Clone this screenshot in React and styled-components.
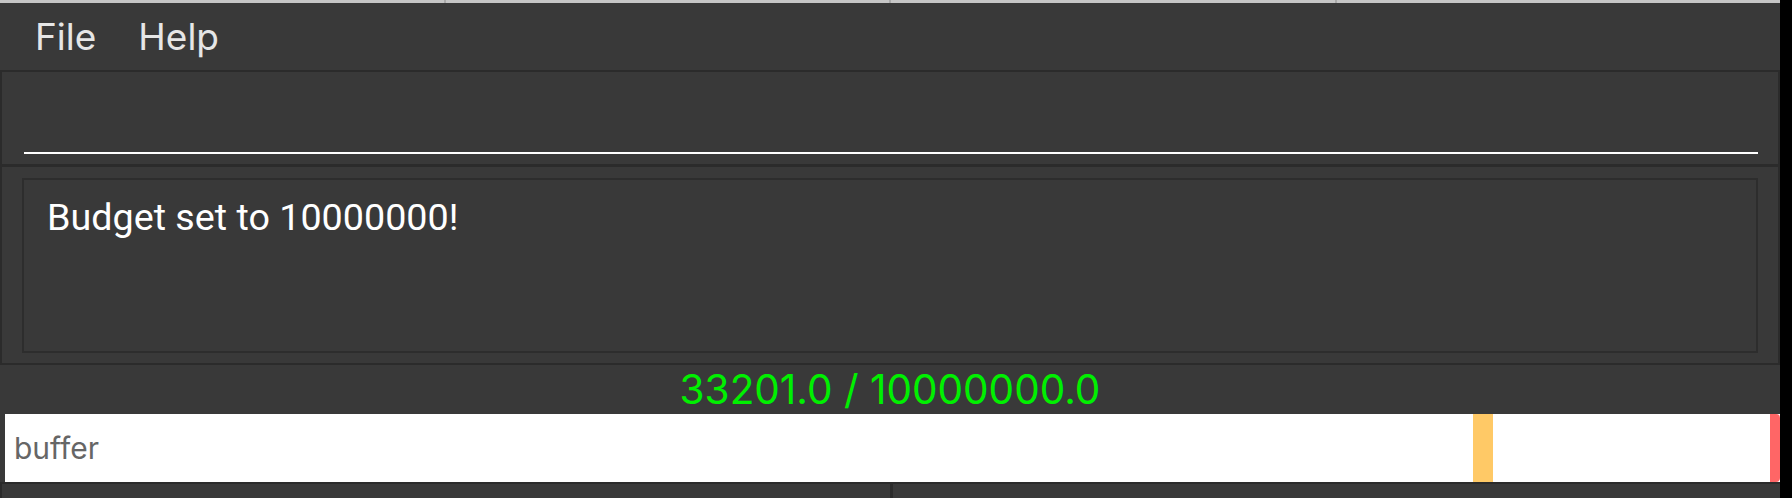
import React from "react";
import styled, { createGlobalStyle } from "styled-components";

const GlobalStyle = createGlobalStyle`
  html, body {
    margin: 0;
    padding: 0;
    background: #000;
    height: 100%;
    overflow: hidden;
  }
  #root { height: 100%; }
`;

const Screen = styled.div`
  display: flex;
  width: 1792px;
  height: 498px;
  background: #000;
`;

const Window = styled.div`
  width: 1780px;
  height: 498px;
  display: flex;
  flex-direction: column;
  background: #393939;
  overflow: hidden;
`;

const TitleStrip = styled.div`
  height: 3px;
  flex: none;
  display: flex;
  background: #c6c6c6;
`;

const StripSegment = styled.div`
  flex: 1;
  border-left: ${(p) => (p.$first ? "none" : "2px solid #a9a9a9")};
`;

const MenuBar = styled.div`
  height: 67px;
  flex: none;
  display: flex;
  align-items: center;
  gap: 42px;
  padding-left: 35px;
  border-bottom: 2px solid #2b2b2b;
  box-sizing: content-box;
`;

const MenuItem = styled.span`
  font-family: Inter, "Liberation Sans", sans-serif;
  font-size: 37px;
  color: #e6e6e6;
  line-height: 1;
`;

const Panel = styled.div`
  flex: none;
  height: ${(p) => p.$h}px;
  box-sizing: border-box;
  border-left: 2px solid #2b2b2b;
  border-right: 2px solid #2b2b2b;
  border-bottom: ${(p) => p.$sep}px solid #2b2b2b;
  padding: ${(p) => p.$pad};
  display: flex;
  flex-direction: column;
`;

const CommandInput = styled.div`
  margin-top: auto;
  height: 2px;
  background: #ffffff;
`;

const ResultBox = styled.div`
  flex: 1;
  border: 2px solid #2d2d2d;
  padding: 15px 23px;
  font-family: Roboto, "Liberation Sans", sans-serif;
  font-size: 37.7px;
  line-height: 1.2;
  color: #ffffff;
`;

const BudgetStatus = styled.div`
  flex: none;
  height: 49px;
  display: flex;
  align-items: flex-end;
  justify-content: center;
  font-family: Inter, "Liberation Sans", sans-serif;
  font-size: 40.5px;
  line-height: 49px;
  color: #00f000;
`;

const BarRow = styled.div`
  flex: none;
  height: 70px;
  box-sizing: border-box;
  padding-left: 5px;
  border-bottom: 2px solid #2b2b2b;
  display: flex;
`;

const BarTrack = styled.div`
  position: relative;
  flex: 1;
  background: #ffffff;
  display: flex;
  align-items: center;
  padding-left: 9px;
`;

const BarLabel = styled.span`
  font-family: Inter, "Liberation Sans", sans-serif;
  font-size: 30px;
  color: #666666;
`;

const Marker = styled.div`
  position: absolute;
  top: 0;
  bottom: 0;
  width: ${(p) => p.$w}px;
  background: ${(p) => p.$color};
  border-radius: ${(p) => p.$radius || "0"};
`;

const StatusBar = styled.div`
  flex: 1;
  display: grid;
  grid-template-columns: 888px 1fr;
  border-left: 2px solid #2b2b2b;
`;

const StatusCell = styled.div`
  border-left: ${(p) => (p.$divider ? "3px solid #2b2b2b" : "none")};
`;

const markers = [
  { left: 1468, w: 20, color: "#ffc966" },
  { left: 1765, w: 10, color: "#ff6666", radius: "0 4px 4px 0" },
];

export default function App() {
  return (
    <>
      <GlobalStyle />
      <Screen>
        <Window>
          <TitleStrip>
            <StripSegment $first />
            <StripSegment />
            <StripSegment />
            <StripSegment />
          </TitleStrip>
          <MenuBar>
            <MenuItem>File</MenuItem>
            <MenuItem>Help</MenuItem>
          </MenuBar>
          <Panel $h={95} $sep={3} $pad="0 20px 10px 22px">
            <CommandInput />
          </Panel>
          <Panel $h={198} $sep={2} $pad="11px 20px 10px 20px">
            <ResultBox>Budget set to 10000000!</ResultBox>
          </Panel>
          <BudgetStatus>33201.0 / 10000000.0</BudgetStatus>
          <BarRow>
            <BarTrack>
              <BarLabel>buffer</BarLabel>
              {markers.map((m, i) => (
                <Marker
                  key={i}
                  $w={m.w}
                  $color={m.color}
                  $radius={m.radius}
                  style={{ left: m.left }}
                />
              ))}
            </BarTrack>
          </BarRow>
          <StatusBar>
            <StatusCell />
            <StatusCell $divider />
          </StatusBar>
        </Window>
      </Screen>
    </>
  );
}
